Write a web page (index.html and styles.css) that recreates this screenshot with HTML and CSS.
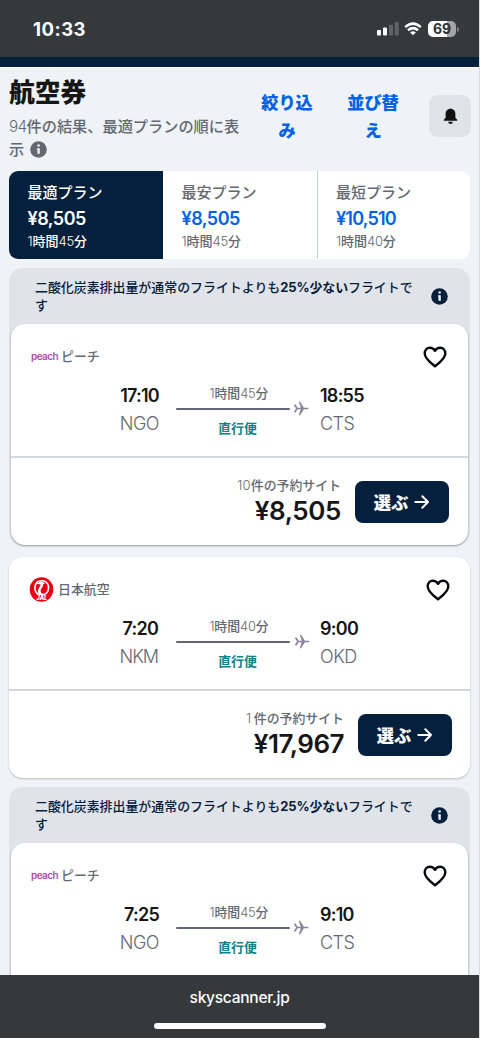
FILE: index.html
```html
<!DOCTYPE html>
<html lang="ja">
<head>
<meta charset="utf-8">
<meta name="viewport" content="width=device-width, initial-scale=1">
<title>航空券</title>
<link rel="stylesheet" href="styles.css">
</head>
<body>
<svg width="0" height="0" class="defs" aria-hidden="true">
  <symbol id="heart" viewBox="0 0 24 22"><path d="M12 20.2C9.8 18.4 1.7 12.8 1.7 7.4C1.7 4 4 1.7 6.8 1.7C9.2 1.7 11 3 12 4.8C13 3 14.8 1.7 17.2 1.7C20 1.7 22.3 4 22.3 7.4C22.3 12.8 14.2 18.4 12 20.2Z" fill="none" stroke="#05080f" stroke-width="2.4" stroke-linejoin="round"/></symbol>
  <symbol id="info" viewBox="0 0 17 17"><circle cx="8.5" cy="8.5" r="8.3" fill="currentColor"/><circle cx="8.6" cy="4.6" r="1.25" class="info-mark"/><path d="M7 7.2H9.8V12.8H7.4V8.6H7Z" class="info-mark"/></symbol>
  <symbol id="plane" viewBox="0 0 15 15"><path d="M1 4.2L3.1 7.5L1 10.8M3 7.5H13.6" fill="none" stroke="#8b839d" stroke-width="1.7" stroke-linecap="round"/><path d="M4.8.8H6.1L10.3 7.5L6.1 14.2H4.8L7 7.5Z" fill="#8b839d"/></symbol>
  <symbol id="arrow" viewBox="0 0 16 16"><path d="M1.3 8H14M8.3 2.2L14 8L8.3 13.8" fill="none" stroke="#fff" stroke-width="2" stroke-linecap="round" stroke-linejoin="round"/></symbol>
</svg>
<div class="screen">
  <header class="status">
    <span class="clock">10:33</span>
    <svg class="signal" viewBox="0 0 22 14"><rect x="0" y="8" width="4" height="5.5" rx="1" fill="#fff"/><rect x="6" y="5.5" width="4" height="8" rx="1" fill="#fff"/><rect x="12" y="2.7" width="4" height="10.8" rx="1" fill="#606365"/><rect x="17.7" y="0" width="4" height="13.5" rx="1" fill="#606365"/></svg>
    <svg class="wifi" viewBox="0 0 18 14"><path d="M1.2 5.1Q9-1.8 16.8 5.1M4 8.2Q9 4 14 8.2" fill="none" stroke="#fff" stroke-width="2.5"/><path d="M6.2 10.4Q9 8.3 11.8 10.4L9 13.3Z" fill="#fff"/></svg>
    <span class="battery">69</span><i class="battery-tip"></i>
  </header>
  <div class="navy"></div>
  <section class="heading">
    <div class="summary">
      <h1>航空券</h1>
      <p><span class="latin">94</span>件の結果、最適プランの順に表<br>示<svg class="info-small"><use href="#info"/></svg></p>
    </div>
    <a class="action filter">絞り込<br>み</a>
    <a class="action sort">並び替<br>え</a>
    <button class="bell"><svg viewBox="0 0 16 18"><path d="M8 .8C4.6.8 2.8 3.3 2.8 6.2V10.2L.8 12.4V13.6H15.2V12.4L13.2 10.2V6.2C13.2 3.3 11.4.8 8 .8Z" fill="#111"/><path d="M5.5 14.7H10.5C10.2 16.3 9.3 17 8 17S5.8 16.3 5.5 14.7Z" fill="#111"/></svg></button>
  </section>
  <nav class="tabs">
    <div class="tab active"><span>最適プラン</span><b>¥8,505</b><small><i class="n">1</i>時間<i class="n">45</i>分</small></div>
    <div class="tab"><span>最安プラン</span><b>¥8,505</b><small><i class="n">1</i>時間<i class="n">45</i>分</small></div>
    <div class="tab"><span>最短プラン</span><b>¥10,510</b><small><i class="n">1</i>時間<i class="n">40</i>分</small></div>
  </nav>
  <main class="results">
    <div class="eco">
      <div class="eco-note"><p>二酸化炭素排出量が通常のフライトよりも<b>25%少ない</b>フライトです</p><svg><use href="#info"/></svg></div>
      <article class="card">
        <div class="airline"><span class="peach">peach</span><span>ピーチ</span><svg class="heart"><use href="#heart"/></svg></div>
        <div class="leg">
          <div class="stop dep"><b>17:10</b><span>NGO</span></div>
          <div class="route"><span><i class="n">1</i>時間<i class="n">45</i>分</span><div class="line"></div><em>直行便</em></div>
          <svg class="plane"><use href="#plane"/></svg>
          <div class="stop"><b>18:55</b><span>CTS</span></div>
        </div>
        <div class="offer"><div class="cost"><span><i class="n ten">10</i>件の予約サイト</span><b>¥8,505</b></div><button class="choose">選ぶ<svg><use href="#arrow"/></svg></button></div>
      </article>
    </div>
    <article class="card wide">
      <div class="airline"><svg class="jal" viewBox="0 0 24 25"><ellipse cx="12" cy="12.5" rx="11.8" ry="12.2" fill="#e60012"/><path d="M8.2 4.6C11 3.2 15 3.6 16.8 5.2C20.6 8.6 19.6 14.8 15.2 17.4H8.4C4.6 14.4 4.2 8.4 8.2 4.6Z" fill="none" stroke="#fff" stroke-width="1.5"/><path d="M7 6.2L12 4.6L15.8 6.2L13.4 7.4C14.2 9.6 11.2 11 11.1 13.8C11 15.6 12.2 16.8 13.6 17.4H9.4C7.2 14.6 9 11.4 11 8.6C11.4 7.6 10.6 7 9.4 7.4Z" fill="#fff"/><text x="12.3" y="22.5" class="jal-text">JAL</text></svg><span>日本航空</span><svg class="heart"><use href="#heart"/></svg></div>
      <div class="leg">
        <div class="stop dep"><b>7:20</b><span class="nkm">NKM</span></div>
        <div class="route"><span><i class="n">1</i>時間<i class="n">40</i>分</span><div class="line"></div><em>直行便</em></div>
        <svg class="plane"><use href="#plane"/></svg>
        <div class="stop"><b>9:00</b><span>OKD</span></div>
      </div>
      <div class="offer"><div class="cost"><span><i class="n single">1</i>件の予約サイト</span><b class="long">¥17,967</b></div><button class="choose">選ぶ<svg><use href="#arrow"/></svg></button></div>
    </article>
    <div class="eco">
      <div class="eco-note"><p>二酸化炭素排出量が通常のフライトよりも<b>25%少ない</b>フライトです</p><svg><use href="#info"/></svg></div>
      <article class="card">
        <div class="airline"><span class="peach">peach</span><span>ピーチ</span><svg class="heart"><use href="#heart"/></svg></div>
        <div class="leg">
          <div class="stop dep"><b>7:25</b><span>NGO</span></div>
          <div class="route"><span><i class="n">1</i>時間<i class="n">45</i>分</span><div class="line"></div><em>直行便</em></div>
          <svg class="plane"><use href="#plane"/></svg>
          <div class="stop"><b>9:10</b><span>CTS</span></div>
        </div>
      </article>
    </div>
  </main>
  <footer class="browser"><span>skyscanner.jp</span><div class="home"></div></footer>
</div>
</body>
</html>
```
FILE: styles.css
```css
* { box-sizing: border-box; margin: 0; padding: 0; }
body { width: 480px; height: 1038px; overflow: hidden; background: #eff2f7; color: #161616; font-family: Inter, "Noto Sans CJK JP", sans-serif; }
.defs { position: absolute; }
svg { display: block; flex: none; }
button { border: 0; font-family: inherit; }
i, em { font-style: normal; }
.screen { display: flex; flex-direction: column; height: 1038px; overflow: hidden; border-right: 1px solid #d9dcdf; }
.status { flex: none; height: 57px; display: flex; align-items: center; background: #35393c; padding: 1px 20px 0 33px; }
.clock { color: #fff; font-size: 18.5px; font-weight: 700; margin-right: auto; letter-spacing: .5px; }
.signal { width: 22px; height: 14px; margin-right: 5px; }
.wifi { width: 18px; height: 14px; margin-right: 6px; }
.battery { width: 28px; height: 16px; border-radius: 5px; background: linear-gradient(90deg, #fff 69%, #a2a4a5 69%); color: #303437; font-size: 14px; line-height: 16px; font-weight: 700; text-align: center; }
.battery-tip { width: 2px; height: 5px; margin-left: 1px; background: #76797b; border-radius: 0 2px 2px 0; }
.navy { flex: none; height: 10px; background: #05203c; }
.heading { flex: none; height: 105px; display: flex; border-top: 1px solid #fff; }
.summary { width: 259px; padding: 9px 0 0 9px; }
h1 { font-size: 25.8px; line-height: 32px; font-weight: 900; }
.summary p { color: #626971; font-size: 15.2px; line-height: 23px; margin-top: 6px; white-space: nowrap; font-weight: 500; }
.latin { letter-spacing: -.6px; font-weight: 300; }
.info-small { display: inline-block; width: 17px; height: 17px; vertical-align: -3px; margin-left: 6px; }
.info-mark { fill: #eff2f7; }
.action { width: 56px; padding-top: 21px; text-align: center; color: #0062e3; font-size: 17.2px; line-height: 27.5px; font-weight: 900; white-space: nowrap; }
.sort { margin-left: 30px; }
.bell { width: 42px; height: 42px; margin: 27px 0 0 28px; border-radius: 9px; background: #e0e3e8; display: grid; place-items: center; }
.bell svg { width: 15px; height: 17px; }
.tabs { flex: none; height: 88px; margin: -1px 9px 9px; display: grid; grid-template-columns: 154px 154px 153px; width: 461px; border-radius: 9px; overflow: hidden; background: #fff; }
.tab { display: flex; flex-direction: column; padding: 10px 0 0 18.5px; color: #626971; white-space: nowrap; }
.tab span { font-size: 15px; line-height: 24px; font-weight: 500; }
.tab b { color: #0062e3; font-size: 18px; line-height: 28px; font-weight: 600; letter-spacing: -.5px; }
.tab small { font-size: 13px; line-height: 17px; font-weight: 500; }
.n { font-weight: 300; letter-spacing: -.2px; }
.tab + .tab + .tab { border-left: 1px solid #c8cdd3; }
.tab + .tab + .tab { padding-left: 18px; }
.tab + .tab + .tab b { letter-spacing: -.8px; }
.active { background: #05203c; color: #fff; }
.active b { color: #fff; }
.results { flex: 1; min-height: 0; overflow: hidden; padding-left: 9px; }
.eco { width: 461px; border-radius: 14px; background: #e0e3e8; }
.eco-note { height: 56px; display: flex; align-items: center; justify-content: space-between; padding: 0 22px 0 26px; color: #05203c; }
.eco-note p { width: 385px; font-size: 12.93px; line-height: 18px; font-weight: 500; }
.eco-note b { font-weight: 700; letter-spacing: -.1px; }
.eco-note svg { width: 17px; height: 17px; }
.card { width: 457px; height: 221px; margin-left: 2px; border-radius: 14px; background: #fff; box-shadow: 0 1px 2px #8f969e; }
.wide { width: 461px; margin: 12px 0 9px; box-shadow: 0 1px 2px #b8bec5; }
.airline { height: 61px; padding: 5px 21px 0 20px; display: flex; align-items: center; font-size: 12.9px; font-weight: 500; color: #626971; }
.airline span { margin-top: -3px; }
.peach { width: 27px; margin-right: 3px; color: #b34aa7; font-size: 10px; font-weight: 600; letter-spacing: -.6px; }
.heart { width: 24px; height: 22px; margin-left: auto; }
.jal { width: 25px; height: 25px; margin: -2px 4px 0 0; }
.jal-text { font: italic 900 5.5px Inter, sans-serif; fill: #fff; text-anchor: middle; }
.wide .airline { padding-right: 20px; }
.leg { height: 72px; display: flex; white-space: nowrap; }
.stop { display: flex; flex-direction: column; }
.stop b { font-size: 18px; line-height: 22px; font-weight: 600; letter-spacing: -.75px; }
.stop span { color: #626971; font-size: 18px; line-height: 22px; margin-top: 6px; font-weight: 300; letter-spacing: -.5px; }
.stop .nkm { letter-spacing: -1px; }
.dep { width: 148px; align-items: flex-end; margin-right: 17px; }
.wide .dep { width: 149px; margin-right: 18px; }
.wide .stop + .route { width: 114px; }
.route { width: 114px; display: flex; flex-direction: column; align-items: center; color: #626971; font-size: 12.9px; line-height: 18px; font-weight: 500; }
.route span { margin-left: 12px; }
.line { width: 114px; height: 2px; background: #626575; margin: 5px 0 10px; border-radius: 1px; }
.route em { color: #0c838a; font-weight: 700; margin-left: 9px; }
.plane { width: 15px; height: 15px; margin: 16px 11px 0 4px; }
.wide .plane { margin: 16px 10px 0 5px; }
.offer { height: 88px; border-top: 2px solid #d2d7dc; margin-top: -1px; display: flex; justify-content: flex-end; padding: 21px 19px 0 0; }
.wide .offer { padding-right: 18px; }
.cost { display: flex; flex-direction: column; align-items: flex-end; margin-right: 14px; white-space: nowrap; }
.cost span { font-size: 12.9px; line-height: 14px; color: #626971; font-weight: 500; }
.cost b { font-size: 26px; line-height: 36px; font-weight: 600; letter-spacing: -.4px; }
.cost .long { letter-spacing: -.5px; }
.cost .ten { letter-spacing: .3px; }
.cost .single { margin: 0 3px 0 0; }
.choose { width: 94px; height: 42px; margin-top: 2px; padding-bottom: 1px; border-radius: 8px; background: #05203c; color: #fff; display: flex; align-items: center; justify-content: center; gap: 6px; font-size: 17.3px; font-weight: 900; }
.choose svg { width: 16px; height: 16px; }
.browser { flex: none; height: 63px; background: #35393c; color: #fff; text-align: center; padding-top: 12px; font-size: 15.5px; line-height: 22px; font-weight: 500; letter-spacing: -.25px; }
.home { width: 172px; height: 6px; border-radius: 3px; background: #fff; margin: 14px auto 0; }
```
